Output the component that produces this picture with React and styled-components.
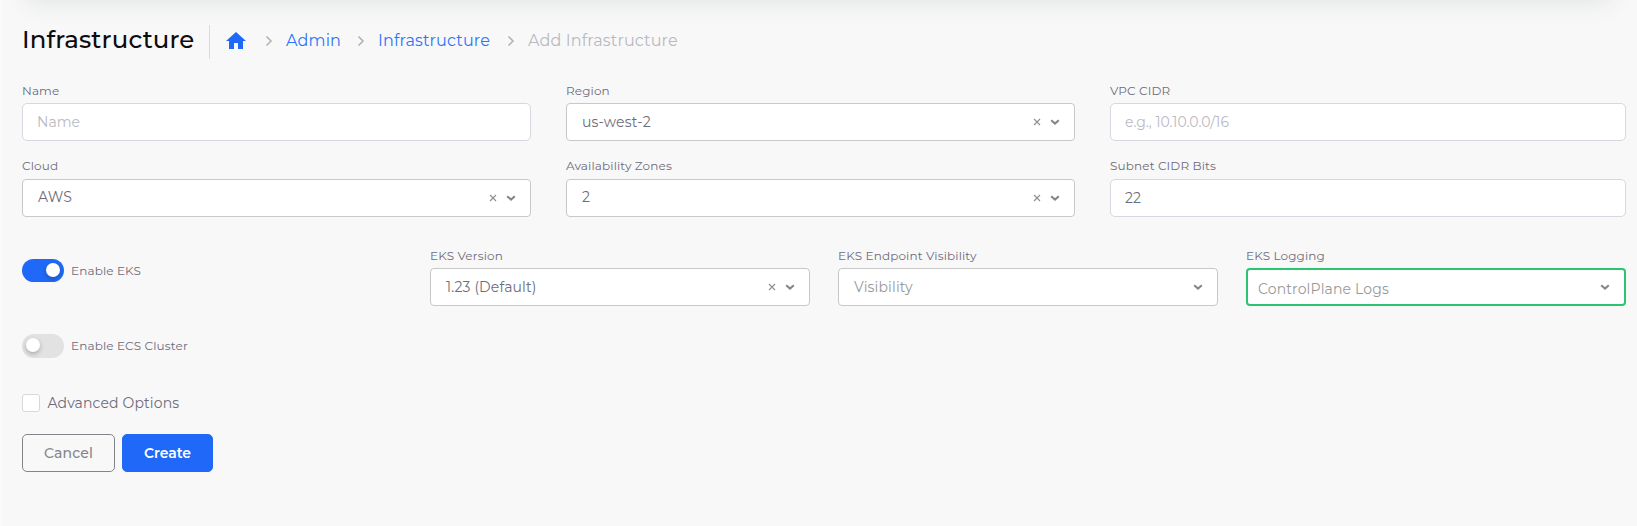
import React from "react";
import styled, { createGlobalStyle, css } from "styled-components";

const GlobalStyle = createGlobalStyle`
  * { box-sizing: border-box; }
  body {
    margin: 0;
    background: #f8f8f8;
    color: #6e6b7b;
    font-family: Montserrat, Inter, "Liberation Sans", sans-serif;
    font-size: 14px;
    letter-spacing: 0.14px;
    overflow: hidden;
  }
  input, button { font-family: inherit; }
`;

const Page = styled.div`
  height: 526px;
  overflow: hidden;
  box-shadow: inset 6px 0 4px -4px rgba(255, 255, 255, 0.5);
`;

const Navbar = styled.header`
  height: 60px;
  margin: -61px 26px 0;
  border-radius: 6px;
  background: #fff;
  box-shadow: 0 4px 24px 0 rgba(34, 61, 51, 0.1);
`;

const Content = styled.main`
  padding: 26px 11px 0 22px;
`;

const TitleBar = styled.div`
  display: flex;
  align-items: center;
  height: 33px;
`;

const Title = styled.h2`
  width: 188px;
  height: 34px;
  margin: 0;
  border-right: 1px solid #d6dce1;
  color: #0c0c0e;
  font-size: 24.4px;
  font-weight: 500;
  line-height: 29px;
  white-space: nowrap;
`;

const Breadcrumb = styled.nav`
  display: flex;
  align-items: center;
  height: 31px;
  padding: 0 0 2px 14px;
  font-size: 16px;
  line-height: 24px;
`;

const Crumb = styled.a`
  width: ${(p) => p.$width}px;
  color: ${(p) => (p.$current ? "#b9b9c3" : "#2d74fa")};
  white-space: nowrap;
`;

const HomeIcon = styled.svg`
  display: block;
  width: 24px;
  height: 24px;
  fill: #2068f8;
`;

const Separator = styled.svg`
  width: 8px;
  height: 12px;
  margin: 0 13px 0 ${(p) => p.$before}px;
  fill: none;
  stroke: #b0b0b5;
  stroke-width: 1.5;
`;

const Grid = styled.section`
  display: grid;
  grid-template-columns: 509px 509px 516px;
  column-gap: 35px;
  row-gap: 14px;
  margin-top: 22px;
`;

const EksGrid = styled.section`
  display: grid;
  grid-template-columns: repeat(4, 380px);
  column-gap: 28px;
  margin-top: 28px;
`;

const FieldBox = styled.div`
  display: flex;
  flex-direction: column;
`;

const Label = styled.label`
  height: ${(p) => p.$height || 23}px;
  padding-top: 3px;
  font-size: 12px;
  line-height: 16px;
  white-space: nowrap;
`;

const controlFrame = css`
  width: 100%;
  height: 38px;
  border-radius: 4px;
  background: #fff;
  font-size: 14px;
`;

const Input = styled.input`
  ${controlFrame}
  padding: 0 14px;
  border: 1px solid #d8d6de;
  border-radius: 5px;
  color: #6e6b7b;
  outline: none;
  &::placeholder { color: #b9b9c3; opacity: 1; }
`;

const SelectBox = styled.div`
  ${controlFrame}
  display: flex;
  align-items: center;
  padding: 0 13px 0 15px;
  border: 1px solid #c8c8c8;
  color: ${(p) => (p.$empty ? "#999" : "#6e6b7b")};
  ${(p) =>
    p.$active &&
    css`
      padding: 0 13px 0 10px;
      border: 2px solid #28c76f;
    `}
`;

const SelectText = styled.span`
  flex: 1;
  padding-top: ${(p) => (p.$low ? 3 : 0)}px;
  padding-bottom: ${(p) => (p.$high ? 2 : 0)}px;
  white-space: nowrap;
`;

const ClearIcon = styled.svg`
  width: 8px;
  height: 8px;
  margin-right: 8px;
  stroke: #919191;
  stroke-width: 1.2;
`;

const ArrowIcon = styled.svg`
  width: 12px;
  height: 12px;
  fill: none;
  stroke: #858585;
  stroke-width: 2;
`;

const SwitchRow = styled.div`
  display: flex;
  align-items: center;
  gap: 7px;
  height: 24px;
  margin-top: ${(p) => p.$top}px;
  font-size: 12px;
`;

const SwitchText = styled.span`
  padding-bottom: ${(p) => (p.$on ? 0 : 2)}px;
`;

const Track = styled.span`
  display: flex;
  justify-content: ${(p) => (p.$on ? "flex-end" : "flex-start")};
  width: 42px;
  height: ${(p) => (p.$on ? 23 : 24)}px;
  padding: 4px ${(p) => (p.$on ? 4.5 : 4)}px 4px 4px;
  border-radius: 12px;
  background: ${(p) => (p.$on ? "#2068f8" : "#e2e2e2")};
`;

const Knob = styled.span`
  width: 14px;
  height: 14px;
  border-radius: 50%;
  background: #fff;
  box-shadow: 0 2px 4px rgba(34, 41, 47, 0.3);
`;

const CheckRow = styled.label`
  display: flex;
  align-items: center;
  gap: 7.4px;
  height: 20px;
  margin-top: 35px;
  font-size: 14px;
`;

const CheckBox = styled.span`
  width: 18px;
  height: 18px;
  border: 1px solid #d8d6de;
  border-radius: 3px;
  background: #fff;
`;

const Actions = styled.div`
  display: flex;
  gap: 7px;
  margin-top: 21px;
`;

const Button = styled.button`
  width: ${(p) => (p.$primary ? 91 : 93)}px;
  height: 38px;
  padding: 0;
  border: 1px solid ${(p) => (p.$primary ? "#2068f8" : "#82868b")};
  border-radius: 5px;
  background: ${(p) => (p.$primary ? "#2068f8" : "transparent")};
  color: ${(p) => (p.$primary ? "#fff" : "#82868b")};
  font-size: 14px;
  font-weight: ${(p) => (p.$primary ? 600 : 500)};
  letter-spacing: ${(p) => (p.$primary ? -0.05 : 0.14)}px;
`;

function Chevron({ before }) {
  return (
    <Separator $before={before} viewBox="0 0 8 12">
      <path d="M1.5 1.5 6 6 1.5 10.5" />
    </Separator>
  );
}

function Select({ label, labelHeight, value, placeholder, active, high }) {
  return (
    <FieldBox>
      <Label $height={labelHeight}>{label}</Label>
      <SelectBox $empty={!value} $active={active}>
        <SelectText $low={active} $high={high}>{value || placeholder}</SelectText>
        {value && (
          <ClearIcon viewBox="0 0 8 8">
            <path d="M1 1 7 7M7 1 1 7" />
          </ClearIcon>
        )}
        <ArrowIcon viewBox="0 0 12 12">
          <path d="M2.2 4.2 6 7.6 9.8 4.2" />
        </ArrowIcon>
      </SelectBox>
    </FieldBox>
  );
}

function TextField({ label, labelHeight, ...input }) {
  return (
    <FieldBox>
      <Label $height={labelHeight}>{label}</Label>
      <Input {...input} />
    </FieldBox>
  );
}

function Switch({ on, top, children }) {
  return (
    <SwitchRow $top={top}>
      <Track $on={on}><Knob /></Track>
      <SwitchText $on={on}>{children}</SwitchText>
    </SwitchRow>
  );
}

export default function App() {
  return (
    <Page>
      <GlobalStyle />
      <Navbar />
      <Content>
        <TitleBar>
          <Title>Infrastructure</Title>
          <Breadcrumb>
            <HomeIcon viewBox="0 0 24 24">
              <path d="M10 20v-6h4v6h5v-8h3L12 3 2 12h3v8z" />
            </HomeIcon>
            <Chevron before={17} />
            <Crumb $width={55}>Admin</Crumb>
            <Chevron before={16} />
            <Crumb $width={112}>Infrastructure</Crumb>
            <Chevron before={17} />
            <Crumb $current $width={150}>Add Infrastructure</Crumb>
          </Breadcrumb>
        </TitleBar>

        <Grid>
          <TextField label="Name" placeholder="Name" />
          <Select label="Region" value="us-west-2" />
          <TextField label="VPC CIDR" placeholder="e.g., 10.10.0.0/16" />
          <Select label="Cloud" labelHeight={24} value="AWS" high />
          <Select label="Availability Zones" labelHeight={24} value="2" high />
          <TextField label="Subnet CIDR Bits" labelHeight={24} defaultValue="22" />
        </Grid>

        <EksGrid>
          <Switch on top={13}>Enable EKS</Switch>
          <Select label="EKS Version" value="1.23 (Default)" />
          <Select label="EKS Endpoint Visibility" placeholder="Visibility" />
          <Select label="EKS Logging" placeholder="ControlPlane Logs" active />
        </EksGrid>

        <Switch top={28}>Enable ECS Cluster</Switch>

        <CheckRow>
          <CheckBox />
          <span>Advanced Options</span>
        </CheckRow>

        <Actions>
          <Button>Cancel</Button>
          <Button $primary>Create</Button>
        </Actions>
      </Content>
    </Page>
  );
}
